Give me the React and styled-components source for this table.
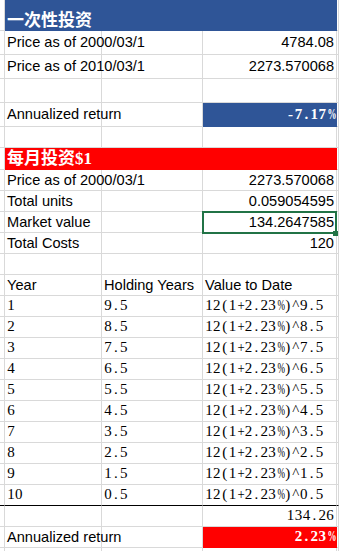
import React from 'react';
import styled, { createGlobalStyle, css } from 'styled-components';

const GRID = '#d9d9d9';
const BLUE = '#2f5597';
const RED = '#ff0000';
const GREEN = '#217346';

const GlobalStyle = createGlobalStyle`
  html, body { margin: 0; padding: 0; background: #fff; }
  body { font-family: "Liberation Sans", Arial, sans-serif; }
`;

const Sheet = styled.div`
  width: 339px;
  height: 551px;
  overflow: hidden;
  background: #fff;
`;

const Row = styled.div`
  display: grid;
  grid-template-columns: 5px 97px 101px 134px 1fr;
  height: ${(p) => p.$h}px;
`;

const fontKinds = {
  sans: css`
    font-family: "Liberation Sans", Arial, sans-serif;
    font-size: 14.6px;
  `,
  mono: css`
    font-family: "Liberation Serif", "Times New Roman", serif;
    font-size: 15px;
  `,
  monoBold: css`
    font-family: "Liberation Serif", "Times New Roman", serif;
    font-size: 15px;
    font-weight: bold;
  `,
  title: css`
    font-family: "Noto Sans CJK SC", sans-serif;
    font-size: 17px;
    font-weight: bold;
  `,
  titleSerif: css`
    font-family: "Liberation Serif", "Noto Sans CJK SC", serif;
    font-size: 17px;
    font-weight: bold;
  `,
};

const Cell = styled.div`
  box-sizing: border-box;
  position: relative;
  min-width: 0;
  border-right: 1px solid ${(p) => p.$fill || GRID};
  border-bottom: 1px solid ${(p) => (p.$rule ? '#000' : p.$fill || GRID)};
  background: ${(p) => p.$fill || 'transparent'};
  color: ${(p) => (p.$fill ? '#fff' : '#000')};
  grid-column: ${(p) => p.$span || 'auto'};
  display: flex;
  align-items: ${(p) => (p.$bottom ? 'flex-end' : 'center')};
  justify-content: ${(p) => (p.$right ? 'flex-end' : 'flex-start')};
  padding: 0 ${(p) => (p.$right ? '2px' : '3px')} ${(p) => (p.$bottom ? '1px' : '0')} 2px;
  white-space: nowrap;
  line-height: 1.15;
  ${(p) => fontKinds[p.$font || 'sans']}

  ${(p) =>
    p.$selected &&
    css`
      &::after {
        content: '';
        position: absolute;
        top: -1px;
        left: -1px;
        right: -1px;
        bottom: -2px;
        border: 2px solid ${GREEN};
        z-index: 1;
      }
      &::before {
        content: '';
        position: absolute;
        right: -2px;
        bottom: -4px;
        width: 5px;
        height: 5px;
        background: ${GREEN};
        z-index: 2;
      }
    `}
`;

const Edge = styled(Cell)`
  padding: 0;
`;

/* Half-width fixed cells, like the SimSun glyphs of the sheet */
const Glyph = styled.span`
  display: inline-block;
  width: 7.9px;
  text-align: center;
  transform: scaleX(${(p) => p.$squeeze || 1});
  transform-origin: center;
`;

const squeezeOf = { '%': 0.6, '+': 0.85 };

function Fixed({ text }) {
  return (
    <span>
      {text.split('').map((ch, i) => (
        <Glyph key={i} $squeeze={squeezeOf[ch]}>
          {ch}
        </Glyph>
      ))}
    </span>
  );
}

function SheetRow({ h, rule, children }) {
  return (
    <Row $h={h}>
      <Edge $rule={rule} />
      {children}
      <Edge $rule={rule} />
    </Row>
  );
}

function TitleRow({ h, fill, font, bottom, children }) {
  return (
    <SheetRow h={h}>
      <Cell $span="2 / 5" $fill={fill} $font={font} $bottom={bottom}>
        {children}
      </Cell>
    </SheetRow>
  );
}

const isFixed = (f) => f === 'mono' || f === 'monoBold';
const show = (v, f) => (v != null && isFixed(f) ? <Fixed text={v} /> : v);

function PlainRow({ h, a, b, c, cFill, cFont, cLeft, selected, rule, aFont, bFont }) {
  return (
    <SheetRow h={h} rule={rule}>
      <Cell $font={aFont} $rule={rule}>{show(a, aFont)}</Cell>
      <Cell $font={bFont} $rule={rule}>{show(b, bFont)}</Cell>
      <Cell $right={!cLeft} $fill={cFill} $font={cFont} $selected={selected} $rule={rule}>
        {show(c, cFont)}
      </Cell>
    </SheetRow>
  );
}

const years = [1, 2, 3, 4, 5, 6, 7, 8, 9, 10];

export default function App() {
  return (
    <>
      <GlobalStyle />
      <Sheet>
        <TitleRow h={31} fill={BLUE} font="title" bottom>一次性投资</TitleRow>
        <PlainRow h={24} a="Price as of 2000/03/1" c="4784.08" />
        <PlainRow h={24} a="Price as of 2010/03/1" c="2273.570068" />
        <PlainRow h={24} />
        <PlainRow h={24} a="Annualized return" c="-7.17%" cFill={BLUE} cFont="monoBold" />
        <PlainRow h={21} />
        <TitleRow h={22} fill={RED} font="titleSerif">每月投资$1</TitleRow>
        <PlainRow h={21} a="Price as of 2000/03/1" c="2273.570068" />
        <PlainRow h={21} a="Total units" c="0.059054595" />
        <PlainRow h={21} a="Market value" c="134.2647585" selected />
        <PlainRow h={21} a="Total Costs" c="120" />
        <PlainRow h={21} />
        <PlainRow h={21} a="Year" b="Holding Years" c="Value to Date" cLeft />
        {years.map((y) => {
          const hold = (10 - y + 0.5).toFixed(1);
          return (
            <PlainRow
              key={y}
              h={21}
              a={String(y)}
              b={hold}
              c={`12(1+2.23%)^${hold}`}
              aFont="mono"
              bFont="mono"
              cFont="mono"
              cLeft
              rule={y === 10}
            />
          );
        })}
        <PlainRow h={21} c="134.26" cFont="mono" />
        <PlainRow h={21} a="Annualized return" c="2.23%" cFill={RED} cFont="monoBold" />
        <PlainRow h={10} />
      </Sheet>
    </>
  );
}
